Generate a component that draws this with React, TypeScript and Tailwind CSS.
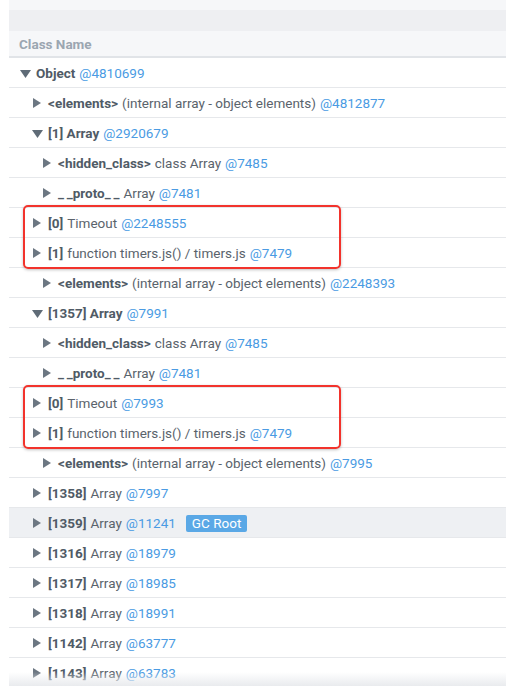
import type { ReactNode } from "react";

type Row = {
  level: number;
  open?: boolean;
  name: string;
  label?: string;
  id: string;
  badge?: string;
  active?: boolean;
};

const rows: Row[] = [
  { level: 0, open: true, name: "Object", id: "@4810699" },
  { level: 1, name: "<elements>", label: "(internal array - object elements)", id: "@4812877" },
  { level: 1, open: true, name: "[1] Array", id: "@2920679" },
  { level: 2, name: "<hidden_class>", label: "class Array", id: "@7485" },
  { level: 2, name: "_\u2009_proto_\u2009_", label: "Array", id: "@7481" },
  { level: 1, name: "[0]", label: "Timeout", id: "@2248555" },
  { level: 1, name: "[1]", label: "function timers.js() / timers.js", id: "@7479" },
  { level: 2, name: "<elements>", label: "(internal array - object elements)", id: "@2248393" },
  { level: 1, open: true, name: "[1357] Array", id: "@7991" },
  { level: 2, name: "<hidden_class>", label: "class Array", id: "@7485" },
  { level: 2, name: "_\u2009_proto_\u2009_", label: "Array", id: "@7481" },
  { level: 1, name: "[0]", label: "Timeout", id: "@7993" },
  { level: 1, name: "[1]", label: "function timers.js() / timers.js", id: "@7479" },
  { level: 2, name: "<elements>", label: "(internal array - object elements)", id: "@7995" },
  { level: 1, name: "[1358]", label: "Array", id: "@7997" },
  { level: 1, name: "[1359]", label: "Array", id: "@11241", badge: "GC Root", active: true },
  { level: 1, name: "[1316]", label: "Array", id: "@18979" },
  { level: 1, name: "[1317]", label: "Array", id: "@18985" },
  { level: 1, name: "[1318]", label: "Array", id: "@18991" },
  { level: 1, name: "[1142]", label: "Array", id: "@63777" },
  { level: 1, name: "[1143]", label: "Array", id: "@63783" },
];

const indent = ["pl-[11px]", "pl-[23px]", "pl-[33px]"];

function Arrow({ open }: { open?: boolean }) {
  if (open) {
    return (
      <svg width="11" height="9" viewBox="0 0 11 9" className="shrink-0 mr-[5px]">
        <path d="M0 1 L11 1 L5.5 9 Z" fill="#5f6b77" />
      </svg>
    );
  }
  return (
    <svg width="8" height="10" viewBox="0 0 8 10" className="shrink-0 mr-[7px] ml-[1px]">
      <path d="M0 0 L8 5 L0 10 Z" fill="#6c7782" />
    </svg>
  );
}

function TreeRow({ row }: { row: Row }) {
  return (
    <div
      className={`flex h-[30px] items-center border-b border-[#e6e8eb] pt-[1px] ${indent[row.level]} ${
        row.active ? "bg-[#eef0f3]" : "bg-white"
      }`}
    >
      <Arrow open={row.open} />
      <span className="font-bold text-[#505b66]">{row.name}</span>
      {row.label && <span className="ml-[4px] text-[#5a636c]">{row.label}</span>}
      <span className="ml-[4px] text-[#4a9be3]">{row.id}</span>
      {row.badge && (
        <span className="ml-[10px] rounded-[2px] bg-[#5aa8e6] px-[6px] text-[13.5px] leading-[17px] text-white">
          {row.badge}
        </span>
      )}
    </div>
  );
}

function Marked({ children }: { children: ReactNode }) {
  return (
    <div className="relative">
      {children}
      <span className="pointer-events-none absolute left-[14px] top-[-3px] bottom-[-1px] w-[318px] rounded-[5px] border-2 border-[#f2332c] shadow-[0_1px_3px_rgba(0,0,0,0.25)]" />
    </div>
  );
}

export default function App() {
  const r = rows.map((row, i) => <TreeRow key={i} row={row} />);

  return (
    <div className="h-[686px] w-[506px] overflow-hidden bg-white font-['Roboto',sans-serif] text-[13.5px]">
      <div className="ml-[9px] relative h-full">
        <div className="h-[10px] bg-[#f6f7f9]" />
        <div className="h-[21px] bg-[#eeeff2]" />
        <div className="flex h-[27px] items-center border-b-2 border-[#e1e4e8] bg-[#f6f7f9] pl-[10px] pt-[1px] font-bold text-[#9ba6b1]">
          Class Name
        </div>
        {r.slice(0, 5)}
        <Marked>{r.slice(5, 7)}</Marked>
        {r.slice(7, 11)}
        <Marked>{r.slice(11, 13)}</Marked>
        {r.slice(13)}
        <div className="pointer-events-none absolute bottom-0 left-0 right-0 h-[14px] bg-gradient-to-b from-transparent to-[#e9ebee]" />
      </div>
    </div>
  );
}
